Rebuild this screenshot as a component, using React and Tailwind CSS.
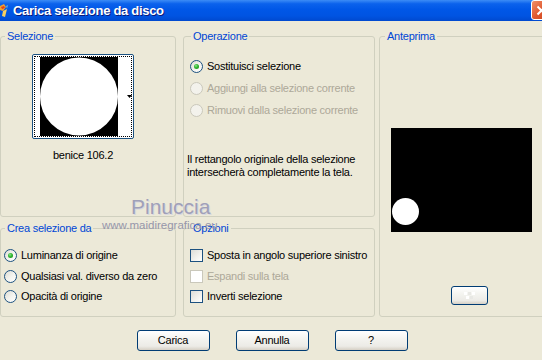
import React from "react";

function Radio({ checked, disabled }) {
  return (
    <span
      className={
        "relative flex h-[13px] w-[13px] shrink-0 items-center justify-center rounded-full border " +
        (disabled
          ? "border-[#CAC8BB] bg-[#F3F2EC]"
          : "border-[#1C5180] bg-[linear-gradient(135deg,#DCDCD4_0%,#F4F4F0_55%,#FFFFFF_100%)]")
      }
    >
      {checked && (
        <span className="h-[5px] w-[5px] rounded-full bg-[radial-gradient(circle_at_40%_35%,#8CE78C_0%,#2DB42D_45%,#1A8C1A_100%)]" />
      )}
    </span>
  );
}

function Check({ disabled }) {
  return (
    <span
      className={
        "h-[13px] w-[13px] shrink-0 border " +
        (disabled
          ? "border-[#CAC8BB] bg-white"
          : "border-[#1C5180] bg-[linear-gradient(135deg,#DCDCD7_0%,#F2F2EE_60%,#FFFFFF_100%)]")
      }
    />
  );
}

function XPButton({ children, className = "" }) {
  return (
    <button
      className={
        "flex items-center justify-center rounded-[3px] border border-[#003C74] bg-[linear-gradient(to_bottom,#FFFFFF_0%,#F4F4F0_40%,#ECEBE6_80%,#D6D0C5_100%)] text-[11px] text-black " +
        className
      }
    >
      {children}
    </button>
  );
}

export default function App() {
  return (
    <div className="relative h-[360px] w-[542px] overflow-hidden whitespace-nowrap bg-[#ECE9D8] font-['Liberation_Sans',Arial,sans-serif] text-[11px] leading-[13px] tracking-[-0.25px] text-black">
      {/* Title bar */}
      <div className="flex h-[21px] items-center bg-[linear-gradient(to_bottom,#3C8CF6_0%,#0B62EC_18%,#0057E7_45%,#0054E2_75%,#0049CF_100%)]">
        <svg width="9" height="16" viewBox="0 0 9 16" className="shrink-0">
          <path d="M0 3 L4 1 L6 4 L3 8 L0 7 Z" fill="#F0A030" />
          <path d="M1 4 L4 3 L5 5 L2 6 Z" fill="#E04020" />
          <path d="M3 8 L7 6 L5 14 L2 13 Z" fill="#F8D060" />
          <path d="M6 3 L8 2 L7 6 Z" fill="#60B0E8" />
        </svg>
        <span className="ml-[4px] text-[13px] font-bold leading-[16px] tracking-[-0.3px] text-white [text-shadow:1px_1px_0_#0A1A7A]">
          Carica selezione da disco
        </span>
        <div className="ml-auto mr-[-10px] flex h-[20px] w-[21px] items-center justify-center self-start rounded-[3px] border border-white bg-[linear-gradient(135deg,#F0906A_0%,#E0582E_50%,#C8441E_100%)]">
          <svg width="11" height="11" viewBox="0 0 11 11">
            <path d="M1.5 1.5 L9.5 9.5 M9.5 1.5 L1.5 9.5" stroke="white" strokeWidth="2" />
          </svg>
        </div>
      </div>

      {/* Body */}
      <div className="flex flex-col pt-[9px]">
        <div className="flex">
          <div className="grid grid-cols-[176px_192px] grid-rows-[187px_95px] gap-x-[7px] gap-y-[5px]">
            {/* Selezione */}
            <fieldset className="m-0 min-w-0 rounded-[3px] border border-[#D0D0BF] p-0">
              <legend className="ml-[4px] px-[2px] leading-[13px] text-[#0046D5]">Selezione</legend>
              <div className="ml-[31px] mt-[11px] flex h-[85px] w-[102px] rounded-[2px] border border-[#1C5180] bg-white p-[1px]">
                <div className="flex h-full w-full border border-dotted border-black">
                  <div className="ml-[5px] h-[79px] w-[78px] bg-black">
                    <svg width="78" height="79" viewBox="0 0 78 79">
                      <circle cx="39" cy="39.5" r="39" fill="white" />
                    </svg>
                  </div>
                  <div className="ml-[9px] mt-[38px]">
                    <svg width="5" height="3" viewBox="0 0 5 3">
                      <path d="M0 0 L5 0 L2.5 3 Z" fill="black" />
                    </svg>
                  </div>
                </div>
              </div>
              <div className="ml-[31px] mt-[10px] w-[102px] text-center">benice 106.2</div>
            </fieldset>

            {/* Operazione */}
            <fieldset className="m-0 min-w-0 rounded-[3px] border border-[#D0D0BF] p-0">
              <legend className="ml-[7px] px-[2px] leading-[13px] text-[#0046D5]">Operazione</legend>
              <div className="mt-[12px] flex flex-col pl-[6px]">
                <div className="flex h-[22px] items-center gap-[4px]">
                  <Radio checked />
                  <span>Sostituisci selezione</span>
                </div>
                <div className="flex h-[22px] items-center gap-[4px] text-[#ACA899]">
                  <Radio disabled />
                  <span>Aggiungi alla selezione corrente</span>
                </div>
                <div className="flex h-[22px] items-center gap-[4px] text-[#ACA899]">
                  <Radio disabled />
                  <span>Rimuovi dalla selezione corrente</span>
                </div>
              </div>
              <p className="mt-[32px] pl-[3px] leading-[13px]">
                Il rettangolo originale della selezione
                <br />
                intersecherà completamente la tela.
              </p>
            </fieldset>

            {/* Crea selezione da */}
            <fieldset className="m-0 min-w-0 rounded-[3px] border border-[#D0D0BF] p-0">
              <legend className="ml-[4px] px-[2px] leading-[13px] text-[#0046D5]">Crea selezione da</legend>
              <div className="mt-[10px] flex flex-col pl-[3px]">
                <div className="flex h-[21px] items-center gap-[4px]">
                  <Radio checked />
                  <span>Luminanza di origine</span>
                </div>
                <div className="flex h-[20px] items-center gap-[4px]">
                  <Radio />
                  <span>Qualsiasi val. diverso da zero</span>
                </div>
                <div className="flex h-[21px] items-center gap-[4px]">
                  <Radio />
                  <span>Opacità di origine</span>
                </div>
              </div>
            </fieldset>

            {/* Opzioni */}
            <fieldset className="m-0 min-w-0 rounded-[3px] border border-[#D0D0BF] p-0">
              <legend className="ml-[7px] px-[2px] leading-[13px] text-[#0046D5]">Opzioni</legend>
              <div className="mt-[10px] flex flex-col pl-[6px]">
                <div className="flex h-[21px] items-center gap-[4px]">
                  <Check />
                  <span>Sposta in angolo superiore sinistro</span>
                </div>
                <div className="flex h-[20px] items-center gap-[4px] text-[#ACA899]">
                  <Check disabled />
                  <span>Espandi sulla tela</span>
                </div>
                <div className="flex h-[21px] items-center gap-[4px]">
                  <Check />
                  <span>Inverti selezione</span>
                </div>
              </div>
            </fieldset>
          </div>

          {/* Anteprima */}
          <fieldset className="m-0 ml-[4px] h-[287px] w-[190px] min-w-0 shrink-0 rounded-[3px] border border-[#D0D0BF] p-0">
            <legend className="ml-[5px] px-[2px] leading-[13px] text-[#0046D5]">Anteprima</legend>
            <div className="ml-[11px] mt-[85px] h-[104px] w-[141px] bg-black">
              <svg width="141" height="104" viewBox="0 0 141 104">
                <circle cx="14.5" cy="83.5" r="13.5" fill="white" />
              </svg>
            </div>
            <XPButton className="ml-[71px] mt-[54px] h-[19px] w-[37px]">
              <svg width="14" height="9" viewBox="0 0 14 9">
                <rect x="1" y="1" width="3" height="3" fill="#FFFFFF" />
                <rect x="5" y="1" width="3" height="3" fill="#E8E8E4" />
                <rect x="9" y="1" width="3" height="3" fill="#FFFFFF" />
                <rect x="3" y="5" width="3" height="3" fill="#FFFFFF" />
                <rect x="7" y="5" width="3" height="3" fill="#E8E8E4" />
              </svg>
            </XPButton>
          </fieldset>
        </div>

        {/* Buttons */}
        <div className="mt-[13px] flex justify-center gap-[26px] pl-[2px]">
          <XPButton className="h-[21px] w-[73px]">Carica</XPButton>
          <XPButton className="h-[21px] w-[73px]">Annulla</XPButton>
          <XPButton className="h-[21px] w-[73px]">?</XPButton>
        </div>
      </div>

      {/* Watermark overlay */}
      <div className="pointer-events-none absolute left-[131px] top-[195px] text-[21px] leading-[24px] tracking-[0px] text-[#A0A0B8] [text-shadow:1px_1px_0_#D8D8E0]">
        Pinuccia
      </div>
      <div className="pointer-events-none absolute left-[102px] top-[219px] text-[11.5px] leading-[13px] tracking-[0px] text-[#9696AA]">
        www.maidiregrafica.eu
      </div>
    </div>
  );
}
